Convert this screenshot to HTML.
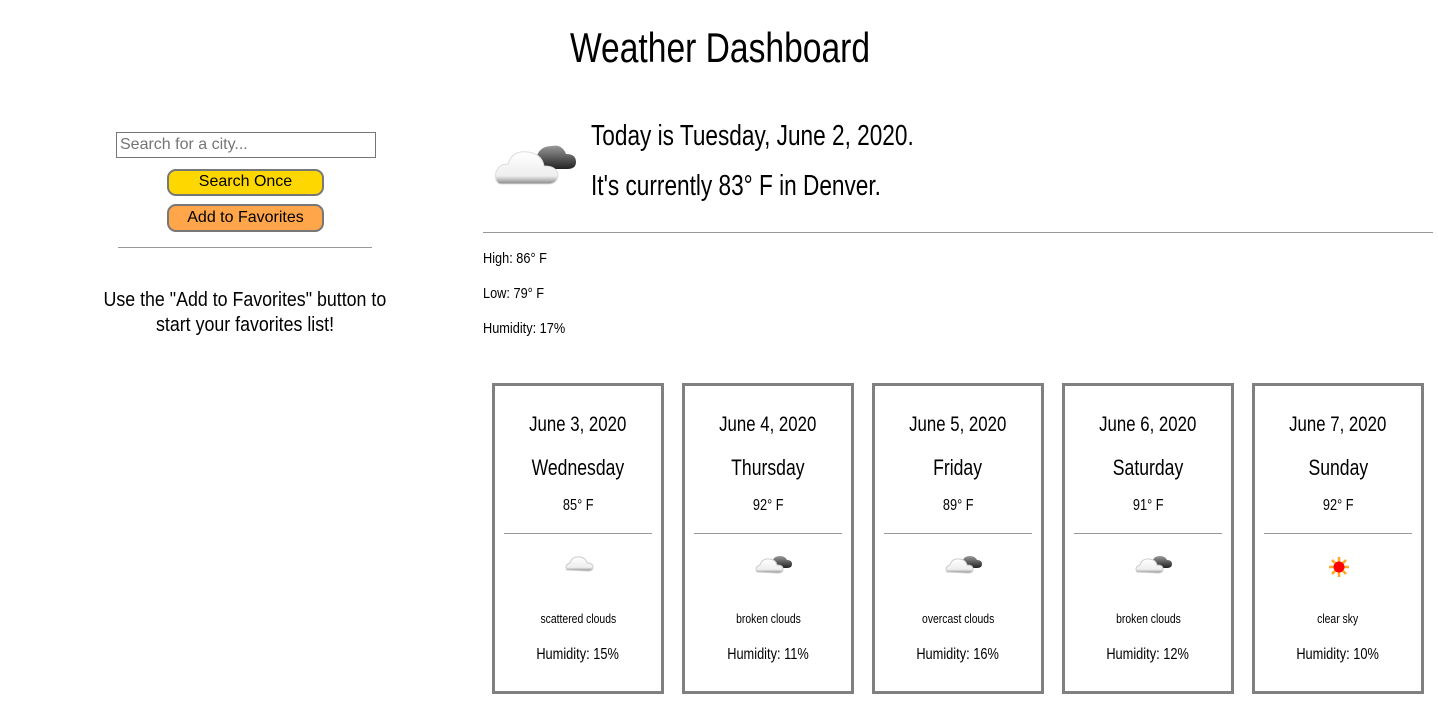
<!DOCTYPE html>
<html><head><meta charset="utf-8"><style>
body{margin:0;width:1438px;height:715px;background:#fff;position:relative;overflow:hidden;font-family:"Liberation Sans",sans-serif;color:#000}
.a{position:absolute;white-space:nowrap}
.c{transform:translateX(-50%)}
.n{display:inline-block;transform:scaleX(.8);transform-origin:center}
.l{display:inline-block;transform:scaleX(.8);transform-origin:left}
.card{position:absolute;top:383px;width:166px;height:305px;border:3px solid #808080;box-sizing:content-box}
.card .t{position:absolute;left:0;right:0;text-align:center;white-space:nowrap}
.card hr{position:absolute;left:9px;right:9px;top:147px;margin:0;border:0;border-top:1px solid #999}
.card svg{position:absolute;left:69px;top:167px}
</style></head><body>
<div class="a c" style="left:720px;top:24px;font-size:42px;"><span class="n">Weather Dashboard</span></div>

<div class="a" style="left:116px;top:132px;width:255px;height:24px;border:1px solid #767676;font-size:16px;color:#757575;line-height:24px;padding-left:3px;box-sizing:content-box">Search for a city...</div>
<div class="a" style="left:167px;top:169px;width:153px;height:23px;border:2px solid #777;border-radius:9px;background:#ffd700;font-size:16px;text-align:center;line-height:22px">Search Once</div>
<div class="a" style="left:167px;top:204px;width:153px;height:24px;border:2px solid #777;border-radius:9px;background:#ffa54a;font-size:16px;text-align:center;line-height:24px">Add to Favorites</div>
<div class="a" style="left:118px;top:247px;width:254px;border-top:1px solid #999"></div>
<div class="a" style="left:45px;top:288px;width:400px;text-align:center;font-size:20px;line-height:25px"><span class="n" style="transform:scaleX(.89)">Use the "Add to Favorites" button to</span><br><span class="n" style="transform:scaleX(.89)">start your favorites list!</span></div>

<svg class="a" style="left:494px;top:130px" width="92" height="60" viewBox="0 0 92 60">
<defs><linearGradient id="w" x1="0" y1="0" x2="0" y2="1"><stop offset="0" stop-color="#fff"/><stop offset=".75" stop-color="#eee"/><stop offset="1" stop-color="#888"/></linearGradient>
<linearGradient id="d" x1="0" y1="0" x2="0" y2="1"><stop offset="0" stop-color="#999"/><stop offset="1" stop-color="#222"/></linearGradient></defs>
<path d="M42 30 q2-14 16-14 q10-2 14 8 q10 0 10 8 q0 7-9 7 h-26z" fill="url(#d)"/>
<path d="M6 54 q-6-2-4-12 q3-8 12-8 q4-14 20-12 q14 2 16 14 q12 0 14 8 q0 10-10 10z" fill="url(#w)" stroke="#ddd"/>
</svg>
<div class="a" style="left:591px;top:120px;font-size:29px;"><span class="l" style="transform:scaleX(.78)">Today is Tuesday, June 2, 2020.</span></div>
<div class="a" style="left:591px;top:170px;font-size:29px;"><span class="l" style="transform:scaleX(.78)">It's currently 83° F in Denver.</span></div>
<div class="a" style="left:483px;top:232px;width:950px;border-top:1px solid #999"></div>
<div class="a" style="left:483px;top:250px;font-size:15px;"><span class="l" style="transform:scaleX(.85)">High: 86° F</span></div>
<div class="a" style="left:483px;top:285px;font-size:15px;"><span class="l" style="transform:scaleX(.85)">Low: 79° F</span></div>
<div class="a" style="left:483px;top:320px;font-size:15px;"><span class="l" style="transform:scaleX(.85)">Humidity: 17%</span></div>

<div class="card" style="left:492px"><div class="t" style="top:27px;font-size:21px"><span class="n">June 3, 2020</span></div><div class="t" style="top:69px;font-size:22px"><span class="n">Wednesday</span></div><div class="t" style="top:111px;font-size:16px"><span class="n">85° F</span></div><hr>
<svg width="32" height="20" viewBox="0 0 32 20"><path d="M3 17 q-3-5 3-7 q2-7 10-6 q6 1 7 6 q6 0 6 4 q0 4-5 4z" fill="url(#w)" stroke="#ccc"/></svg>
<div class="t" style="top:225px;font-size:13px"><span class="n">scattered clouds</span></div><div class="t" style="top:260px;font-size:16px"><span class="n">Humidity: 15%</span></div></div>

<div class="card" style="left:682px"><div class="t" style="top:27px;font-size:21px"><span class="n">June 4, 2020</span></div><div class="t" style="top:69px;font-size:22px"><span class="n">Thursday</span></div><div class="t" style="top:111px;font-size:16px"><span class="n">92° F</span></div><hr>
<svg width="40" height="22" viewBox="0 0 40 22"><path d="M18 10 q1-7 8-7 q5 0 7 4 q5 0 5 4 q0 4-5 4 h-14z" fill="url(#d)"/><path d="M3 19 q-3-5 3-7 q2-7 10-6 q6 1 7 6 q6 0 6 4 q0 4-5 4z" fill="url(#w)" stroke="#ccc"/></svg>
<div class="t" style="top:225px;font-size:13px"><span class="n">broken clouds</span></div><div class="t" style="top:260px;font-size:16px"><span class="n">Humidity: 11%</span></div></div>

<div class="card" style="left:872px"><div class="t" style="top:27px;font-size:21px"><span class="n">June 5, 2020</span></div><div class="t" style="top:69px;font-size:22px"><span class="n">Friday</span></div><div class="t" style="top:111px;font-size:16px"><span class="n">89° F</span></div><hr>
<svg width="40" height="22" viewBox="0 0 40 22"><path d="M18 10 q1-7 8-7 q5 0 7 4 q5 0 5 4 q0 4-5 4 h-14z" fill="url(#d)"/><path d="M3 19 q-3-5 3-7 q2-7 10-6 q6 1 7 6 q6 0 6 4 q0 4-5 4z" fill="url(#w)" stroke="#ccc"/></svg>
<div class="t" style="top:225px;font-size:13px"><span class="n">overcast clouds</span></div><div class="t" style="top:260px;font-size:16px"><span class="n">Humidity: 16%</span></div></div>

<div class="card" style="left:1062px"><div class="t" style="top:27px;font-size:21px"><span class="n">June 6, 2020</span></div><div class="t" style="top:69px;font-size:22px"><span class="n">Saturday</span></div><div class="t" style="top:111px;font-size:16px"><span class="n">91° F</span></div><hr>
<svg width="40" height="22" viewBox="0 0 40 22"><path d="M18 10 q1-7 8-7 q5 0 7 4 q5 0 5 4 q0 4-5 4 h-14z" fill="url(#d)"/><path d="M3 19 q-3-5 3-7 q2-7 10-6 q6 1 7 6 q6 0 6 4 q0 4-5 4z" fill="url(#w)" stroke="#ccc"/></svg>
<div class="t" style="top:225px;font-size:13px"><span class="n">broken clouds</span></div><div class="t" style="top:260px;font-size:16px"><span class="n">Humidity: 12%</span></div></div>

<div class="card" style="left:1252px"><div class="t" style="top:27px;font-size:21px"><span class="n">June 7, 2020</span></div><div class="t" style="top:69px;font-size:22px"><span class="n">Sunday</span></div><div class="t" style="top:111px;font-size:16px"><span class="n">92° F</span></div><hr>
<svg style="left:73px;top:170px" width="22" height="22" viewBox="0 0 22 22"><g stroke="#ffa726" stroke-width="2.5"><path d="M11 1v20M1 11h20M4 4l14 14M18 4L4 18"/></g><circle cx="11" cy="11" r="5.5" fill="#f00"/></svg>
<div class="t" style="top:225px;font-size:13px"><span class="n">clear sky</span></div><div class="t" style="top:260px;font-size:16px"><span class="n">Humidity: 10%</span></div></div>
</body></html>
